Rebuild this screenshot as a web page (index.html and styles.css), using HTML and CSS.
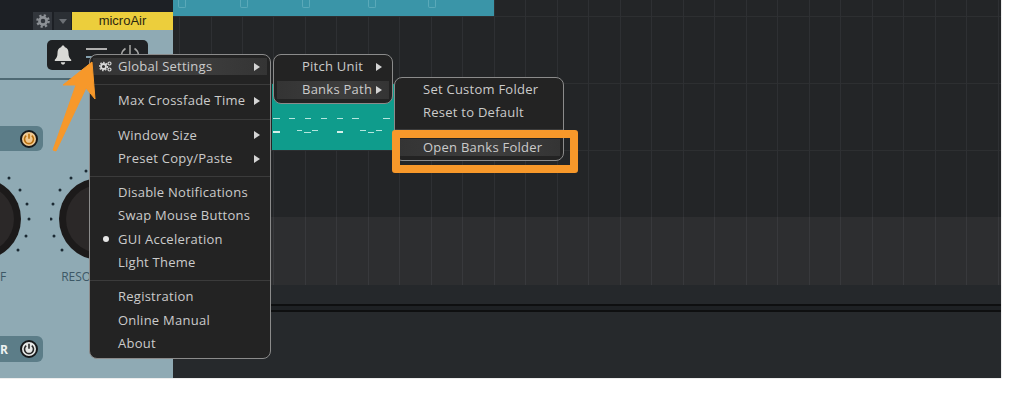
FILE: index.html
```html
<!DOCTYPE html>
<html lang="en">
<head>
  <meta charset="UTF-8">
  <title>microAir - Open Banks Folder</title>
  <link rel="stylesheet" href="styles.css">
</head>
<body>
  <div class="window">
    <!-- plugin panel -->
    <div class="plugin">
      <div class="device-bar">
        <div class="device-btn gear-btn">
          <svg width="14" height="14" viewBox="0 0 14 14"><circle cx="7" cy="7" r="3.6" fill="none" stroke="#8d9196" stroke-width="2.6"/><circle cx="7" cy="7" r="5.6" fill="none" stroke="#8d9196" stroke-width="2.4" stroke-dasharray="2.2 2.2"/></svg>
        </div>
        <div class="device-btn drop-btn"><span class="drop-tri"></span></div>
        <div class="device-name">microAir</div>
      </div>
      <div class="face">
        <div class="toolbar-row">
          <div class="toolbar">
            <svg width="18" height="20" viewBox="0 0 18 20"><path d="M9 0.5c1 0 1.6.7 1.6 1.6 3 .8 3.9 3.4 3.9 6 0 3.4.9 5 2.7 6.7v1.2H.8v-1.2c1.800-1.700 2.700-3.300 2.700-6.700 0-2.600.9-5.200 3.900-6C7.400 1.200 8 .5 9 .5zM6.800 17.200h4.400C11 18.600 10.100 19.500 9 19.500s-2-.9-2.200-2.300z" fill="#d9d9d6"/></svg>
            <svg class="lines-icon" width="22" height="14" viewBox="0 0 22 14"><path d="M0 1h21" stroke="#d5d5d2" stroke-width="1.600"/><path d="M0 9h21" stroke="#9fc3d4" stroke-width="1.600"/></svg>
            <svg class="power-line" width="20" height="20" viewBox="0 0 20 20"><path d="M5.500 3.500a8.500 8.500 0 1 0 9 0" fill="none" stroke="#a8a8a6" stroke-width="1.500"/><path d="M10 0v9" stroke="#a8a8a6" stroke-width="1.500"/></svg>
          </div>
        </div>
        <div class="divider"></div>
        <div class="pill pill-first">
          <span class="power power-on">
            <svg width="12" height="12" viewBox="0 0 12 12"><path d="M3.200 2.600a4.500 4.500 0 1 0 5.600 0" fill="none" stroke="#b9700f" stroke-width="1.600"/><path d="M6 .8v5" stroke="#b9700f" stroke-width="1.600"/></svg>
          </span>
        </div>
        <div class="knobs">
          <svg class="knob" width="100" height="100" viewBox="0 0 100 100">
            <g fill="#1b2a33"><circle cx="69" cy="9" r="1.500"/><circle cx="80" cy="21" r="1.500"/><circle cx="87" cy="35" r="1.500"/><circle cx="89" cy="50" r="1.500"/><circle cx="86" cy="67" r="1.500"/><circle cx="78" cy="81" r="1.500"/></g>
            <circle cx="40" cy="50" r="41" fill="#1c1a1a"/>
            <circle cx="40" cy="50" r="34" fill="#2b2828"/>
          </svg>
          <svg class="knob" width="100" height="100" viewBox="0 0 100 100">
            <g fill="#1b2a33"><circle cx="21" cy="9" r="1.500"/><circle cx="10" cy="21" r="1.500"/><circle cx="3" cy="35" r="1.500"/><circle cx="1" cy="50" r="1.500"/><circle cx="4" cy="67" r="1.500"/><circle cx="12" cy="81" r="1.500"/><circle cx="36" cy="2" r="1.500"/></g>
            <circle cx="50" cy="50" r="41" fill="#1c1a1a"/>
            <circle cx="50" cy="50" r="34" fill="#2b2828"/>
          </svg>
        </div>
        <div class="knob-labels">
          <span class="knob-label">F</span>
          <span class="knob-label label-right">RESO</span>
        </div>
        <div class="pill pill-last">
          <span class="pill-text">R</span>
          <span class="power power-off">
            <svg width="12" height="12" viewBox="0 0 12 12"><path d="M3.200 2.600a4.500 4.500 0 1 0 5.600 0" fill="none" stroke="#2a2a2a" stroke-width="1.600"/><path d="M6 .8v5" stroke="#2a2a2a" stroke-width="1.600"/></svg>
          </span>
        </div>
      </div>
    </div>

    <!-- arranger -->
    <div class="arranger">
      <div class="tracks">
        <div class="clip-cyan">
          <span class="notch"></span><span class="notch"></span><span class="notch"></span><span class="notch notch-far"></span><span class="notch"></span>
        </div>
        <div class="clip-teal">
          <div class="note-row">
            <i class="n" style="left:1px;width:7px"></i><i class="n" style="left:17px;width:6px"></i><i class="n" style="left:33px;width:6px"></i><i class="n" style="left:49px;width:6px"></i><i class="n" style="left:65px;width:6px"></i><i class="n" style="left:80px;width:7px"></i><i class="n" style="left:111px;width:7px"></i>
          </div>
          <div class="note-row note-row-2">
            <i class="n n-thick" style="left:1px;width:7px;top:1px"></i><i class="n" style="left:25px;width:5px"></i><i class="n" style="left:32px;width:7px;top:2px"></i><i class="n" style="left:40px;width:6px"></i><i class="n n-thick" style="left:65px;width:6px;top:1px"></i><i class="n" style="left:88px;width:6px"></i><i class="n" style="left:96px;width:6px;top:2px"></i><i class="n" style="left:104px;width:6px"></i>
          </div>
        </div>
      </div>
      <div class="band"></div>
      <div class="lane"></div>
      <div class="rails"></div>
      <div class="bottom"></div>
    </div>

    <!-- context menus -->
    <div class="menu menu-main">
      <div class="section">
        <div class="item active">
          <span class="mark">
            <svg width="13" height="11" viewBox="0 0 13 11"><circle cx="4.500" cy="5.500" r="2.500" fill="none" stroke="#d8d8d8" stroke-width="1.800"/><circle cx="4.500" cy="5.500" r="4" fill="none" stroke="#d8d8d8" stroke-width="1.400" stroke-dasharray="1.500 1.500"/><circle cx="10.500" cy="2.500" r="1.500" fill="none" stroke="#d8d8d8" stroke-width="1.200"/><circle cx="10.500" cy="8.500" r="1.500" fill="none" stroke="#d8d8d8" stroke-width="1.200"/></svg>
          </span>Global Settings<span class="tri"></span>
        </div>
      </div>
      <div class="section">
        <div class="item"><span class="mark"></span>Max Crossfade Time<span class="tri"></span></div>
      </div>
      <div class="section">
        <div class="item"><span class="mark"></span>Window Size<span class="tri"></span></div>
        <div class="item"><span class="mark"></span>Preset Copy/Paste<span class="tri"></span></div>
      </div>
      <div class="section">
        <div class="item"><span class="mark"></span>Disable Notifications</div>
        <div class="item"><span class="mark"></span>Swap Mouse Buttons</div>
        <div class="item"><span class="mark"><span class="dot"></span></span>GUI Acceleration</div>
        <div class="item"><span class="mark"></span>Light Theme</div>
      </div>
      <div class="section section-end">
        <div class="item"><span class="mark"></span>Registration</div>
        <div class="item"><span class="mark"></span>Online Manual</div>
        <div class="item"><span class="mark"></span>About</div>
      </div>
    </div>

    <div class="menu menu-pitch">
      <div class="item"><span class="mark"></span>Pitch Unit<span class="tri"></span></div>
      <div class="item active"><span class="mark"></span>Banks Path<span class="tri"></span></div>
    </div>

    <div class="menu menu-banks">
      <div class="section section-short">
        <div class="item"><span class="mark"></span>Set Custom Folder</div>
        <div class="item"><span class="mark"></span>Reset to Default</div>
      </div>
      <div class="section section-end">
        <div class="item active"><span class="mark"></span>Open Banks Folder</div>
      </div>
    </div>

    <!-- annotations -->
    <div class="highlight-box"></div>
    <svg class="arrow" width="60" height="100" viewBox="0 0 60 100">
      <path d="M42 2 45 39 36 28 6 91 3 90 26 25 13 25Z" fill="#f7982a" stroke="#f7982a" stroke-linejoin="round"/>
    </svg>
  </div>
</body>
</html>
```

FILE: styles.css
```css
html, body {
  margin: 0;
  height: 100%;
  background-color: #fff;
  overflow: hidden;
}

body {
  font-family: "Open Sans", "Liberation Sans", sans-serif;
}

.window {
  position: relative;
  display: flex;
  width: 1001px;
  height: 378px;
  overflow: hidden;
  box-shadow: 0 0 1px #999;
}

/* plugin panel */
.plugin {
  display: flex;
  flex-direction: column;
  width: 173px;
  flex-shrink: 0;
  overflow: hidden;
}

.device-bar {
  display: flex;
  align-items: stretch;
  height: 18px;
  padding: 12px 0 0 33px;
  background-color: #1d2025;
}

.device-btn {
  display: flex;
  align-items: center;
  justify-content: center;
}

.gear-btn {
  width: 19px;
  background-color: #32363c;
}

.drop-btn {
  width: 17px;
  margin-left: 2px;
  margin-right: 1px;
  background-color: #2b2f34;
}

.drop-tri {
  width: 0;
  height: 0;
  border-left: 4px solid transparent;
  border-right: 4px solid transparent;
  border-top: 5px solid #6c7075;
}

.device-name {
  flex: 1;
  text-align: center;
  font-family: "Liberation Sans", sans-serif;
  font-size: 13px;
  line-height: 17px;
  color: #2b2610;
  background-color: #ecce3c;
}

.face {
  flex: 1;
  display: flex;
  flex-direction: column;
  background-color: #8faab4;
}

.toolbar-row {
  display: flex;
  padding: 10px 0 0 47px;
}

.toolbar {
  display: flex;
  align-items: center;
  width: 101px;
  height: 30px;
  padding-left: 7px;
  box-sizing: border-box;
  border-radius: 5px;
  background-color: #1f2123;
}

.lines-icon {
  margin-left: 14px;
}

.power-line {
  margin-left: 12px;
}

.divider {
  height: 2px;
  margin-top: 8px;
  background-color: #4e6973;
}

.pill {
  display: flex;
  align-items: center;
  justify-content: flex-end;
  width: 43px;
  height: 25px;
  padding-right: 5px;
  box-sizing: border-box;
  border-radius: 0 6px 6px 0;
  background-color: #5c7d88;
}

.pill-first {
  margin-top: 46px;
}

.pill-last {
  justify-content: space-between;
  height: 26px;
  margin-top: 51px;
}

.pill-text {
  font-size: 12px;
  font-weight: 700;
  color: #eef2f2;
}

.power {
  display: flex;
  align-items: center;
  justify-content: center;
  width: 18px;
  height: 18px;
  box-sizing: border-box;
  border-radius: 50%;
  border: 2px solid #16181a;
}

.power-on {
  background-color: #f0c890;
}

.power-off {
  background-color: #e6e8e6;
}

.knobs {
  display: flex;
  gap: 10px;
  margin: 18px 0 0 -60px;
}

.knob {
  flex-shrink: 0;
}

.knob-labels {
  display: flex;
  height: 16px;
  font-size: 12px;
  line-height: 16px;
  color: #3d5866;
}

.label-right {
  margin-left: 55px;
}

/* arranger */
.arranger {
  flex: 1;
  display: flex;
  flex-direction: column;
  min-width: 0;
}

.tracks {
  position: relative;
  height: 217px;
  background-color: #232527;
  background-image:
    repeating-linear-gradient(90deg, transparent 0 6px, #2e3033 6px 7px, transparent 7px 31.5px),
    repeating-linear-gradient(180deg, transparent 0 16px, #2d2f31 16px 17px, transparent 17px 67px);
}

.clip-cyan {
  position: absolute;
  left: 0;
  top: 0;
  display: flex;
  gap: 54px;
  width: 321px;
  height: 16px;
  padding-left: 5px;
  box-sizing: border-box;
  background-color: #3a95a8;
}

.notch {
  width: 8px;
  height: 8px;
  box-sizing: border-box;
  border: 1px solid #5aa9b9;
  border-top: 0;
  border-radius: 0 0 2px 2px;
}

.notch-far {
  margin-left: 4px;
  margin-right: -2px;
}

.clip-teal {
  position: absolute;
  left: 99px;
  top: 84px;
  width: 122px;
  height: 66px;
  background-color: #0f9c8c;
}

.note-row {
  position: relative;
  height: 2px;
  margin-top: 34px;
}

.note-row-2 {
  margin-top: 10px;
}

.n {
  position: absolute;
  top: 0;
  height: 1px;
  background-color: #b5e6de;
}

.n-thick {
  height: 2px;
  background-color: #d5f0ea;
}

.band {
  height: 68px;
  background-color: #2d2e30;
  background-image: repeating-linear-gradient(90deg, transparent 0 6px, #38393c 6px 7px, transparent 7px 31.5px);
}

.lane {
  height: 19px;
  background-color: #25282b;
}

.rails {
  height: 4px;
  border-top: 2px solid #0e0f10;
  border-bottom: 2px solid #0e0f10;
  background-color: #1e2124;
}

.bottom {
  flex: 1;
  background-color: #26292c;
}

/* context menus */
.menu {
  position: absolute;
  box-sizing: border-box;
  border: 1px solid #8b8b8b;
  border-radius: 8px;
  background-color: #232323;
  font-size: 13px;
  letter-spacing: 0.25px;
  color: #cbcbcb;
}

.menu-main {
  left: 89px;
  top: 54px;
  width: 182px;
  height: 305px;
}

.menu-pitch {
  left: 273px;
  top: 54px;
  width: 120px;
  height: 50px;
}

.menu-banks {
  left: 394px;
  top: 77px;
  width: 170px;
  height: 84px;
}

.section {
  padding: 4px 0 6px;
  border-bottom: 1px solid #3b3b3b;
}

.section:first-child {
  padding: 0 0 6px;
}

.section-end {
  padding-bottom: 0;
  border-bottom: 0;
}

.menu-banks .section:first-child {
  padding-bottom: 4px;
}

.menu-banks .section-end {
  padding-top: 6px;
}

.item {
  display: flex;
  align-items: flex-start;
  height: 23.3px;
  margin: 0 3px;
  padding: 3px 0;
  box-sizing: border-box;
  line-height: 16px;
  white-space: nowrap;
}

.item.active {
  background-image: linear-gradient(90deg, #343434, #3d3d3d 60%, #343434);
  background-clip: content-box;
  border-radius: 3px;
}

.mark {
  display: flex;
  align-items: center;
  justify-content: center;
  align-self: center;
  width: 25px;
  flex-shrink: 0;
}

.dot {
  width: 6px;
  height: 6px;
  border-radius: 50%;
  background-color: #e6e6e6;
}

.tri {
  align-self: center;
  width: 0;
  height: 0;
  margin-left: auto;
  margin-right: 7px;
  border-top: 4px solid transparent;
  border-bottom: 4px solid transparent;
  border-left: 6px solid #d4d4d4;
}

/* annotations */
.highlight-box {
  position: absolute;
  left: 392px;
  top: 130px;
  width: 186px;
  height: 43px;
  box-sizing: border-box;
  border: 8px solid #f7982a;
  border-radius: 3px;
}

.arrow {
  position: absolute;
  left: 50px;
  top: 60px;
}
```
